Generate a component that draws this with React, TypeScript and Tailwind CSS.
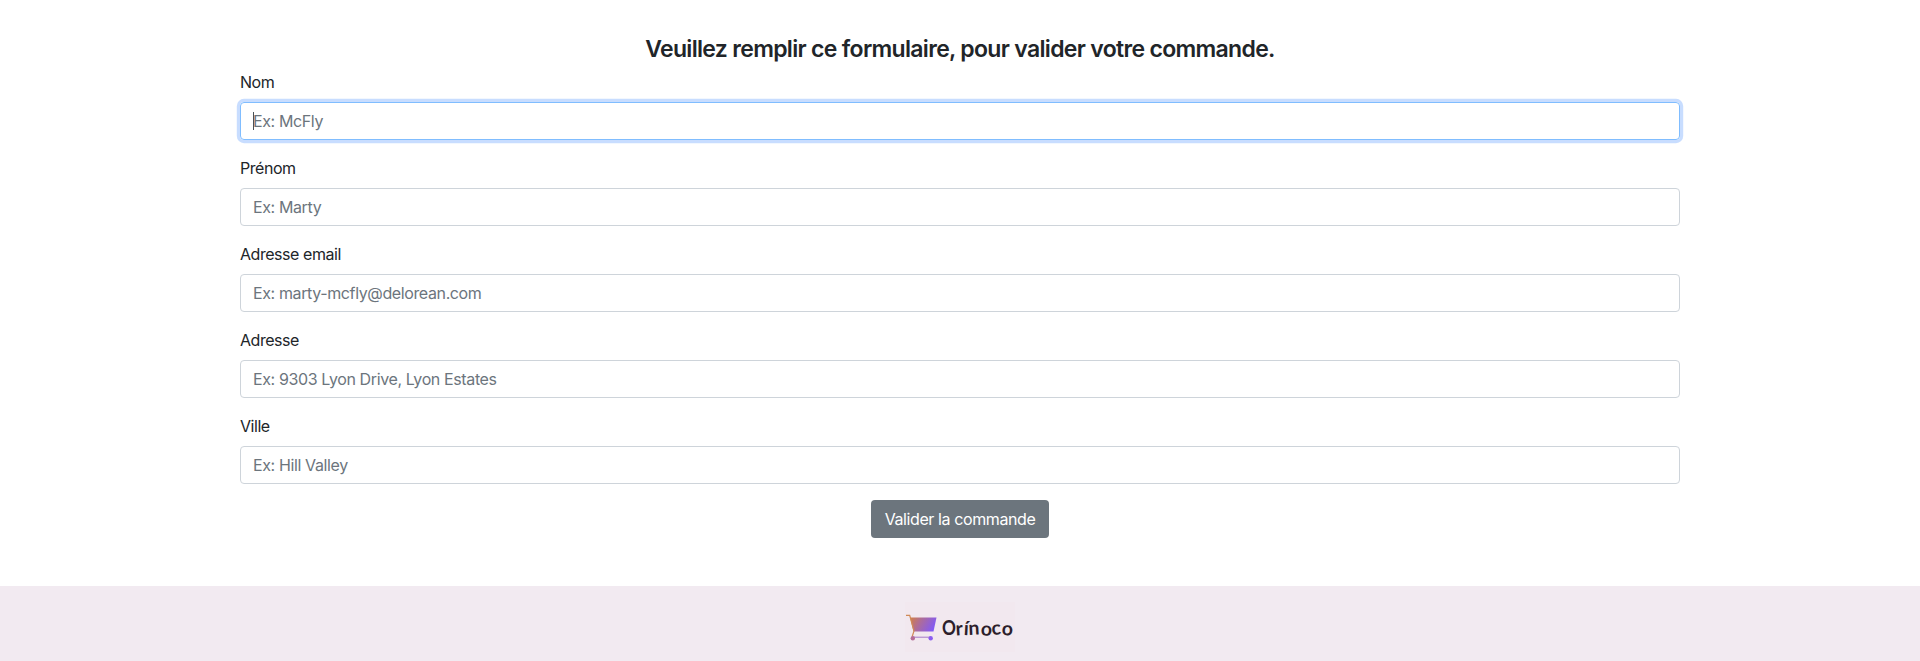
const fields = [
  { label: "Nom", hint: "Ex: McFly", active: true },
  { label: "Prénom", hint: "Ex: Marty", active: false },
  { label: "Adresse email", hint: "Ex: marty-mcfly@delorean.com", active: false },
  { label: "Adresse", hint: "Ex: 9303 Lyon Drive, Lyon Estates", active: false },
  { label: "Ville", hint: "Ex: Hill Valley", active: false },
];

function Logo() {
  return (
    <svg width="110" height="50" viewBox="0 0 110 50" className="block bg-[#f2e8ef]">
      <defs>
        <linearGradient id="cart" gradientUnits="userSpaceOnUse" x1="4" y1="14" x2="29" y2="28">
          <stop offset="0" stopColor="#d98238" />
          <stop offset="0.45" stopColor="#ad6c9b" />
          <stop offset="1" stopColor="#8059fb" />
        </linearGradient>
      </defs>
      <path d="M5 15.5H31.5L28.5 29.5H8.5Z" fill="url(#cart)" />
      <path d="M1 13.3H4.7L9 29L7.2 34.5" fill="none" stroke="#d08a58" strokeWidth="1.2" />
      <path d="M8 35.2H26" stroke="#a577c8" strokeWidth="1" />
      <circle cx="7.8" cy="36.3" r="2.2" fill="#b56c98" />
      <circle cx="25.7" cy="36.3" r="2.2" fill="#8b5cf0" />
      <g fill="#2d1e2b" fontFamily="Lato, sans-serif" fontWeight="700">
        <text transform="scale(0.82 1)" x="45.2" y="33" fontSize="21">O</text>
        <text
          fontSize="19.5"
          x="51 58.6 63.8 75.5 87 96.6"
          y="33.5 33 33 33.2 33 33"
          rotate="-4 3 -3 4 -5 3"
        >
          rínoco
        </text>
      </g>
    </svg>
  );
}

export default function App() {
  return (
    <div className="flex h-[661px] flex-col bg-white font-[Inter,sans-serif] text-[16px] leading-6 text-[#212529]">
      <main className="mx-auto flex w-[1440px] flex-1 flex-col pt-[35px]">
        <h1 className="mb-[6px] text-center text-[23px] leading-[29px] font-semibold tracking-[-0.68px]">
          Veuillez remplir ce formulaire, pour valider votre commande.
        </h1>
        <form className="flex flex-col">
          {fields.map((f) => (
            <div key={f.label} className="mb-4 flex flex-col gap-2">
              <label className="tracking-[-0.45px]">{f.label}</label>
              <div
                className={
                  "relative flex h-[38px] items-center rounded-[4px] border px-3 text-[#6c757d] " +
                  (f.active ? "border-[#80bdff] shadow-[0_0_0_3.2px_#c8ddff]" : "border-[#ced4da]")
                }
              >
                {f.active && <span className="absolute top-[9px] left-3 h-[18px] w-px bg-[#495057]" />}
                <span className="tracking-[-0.38px]">{f.hint}</span>
              </div>
            </div>
          ))}
          <button type="button" className="h-[38px] w-[178px] self-center rounded-[4px] bg-[#6c757d] tracking-[-0.4px] text-white">
            Valider la commande
          </button>
        </form>
      </main>
      <footer className="flex h-[75px] justify-center bg-[#f2eaf1] pt-4">
        <Logo />
      </footer>
    </div>
  );
}
